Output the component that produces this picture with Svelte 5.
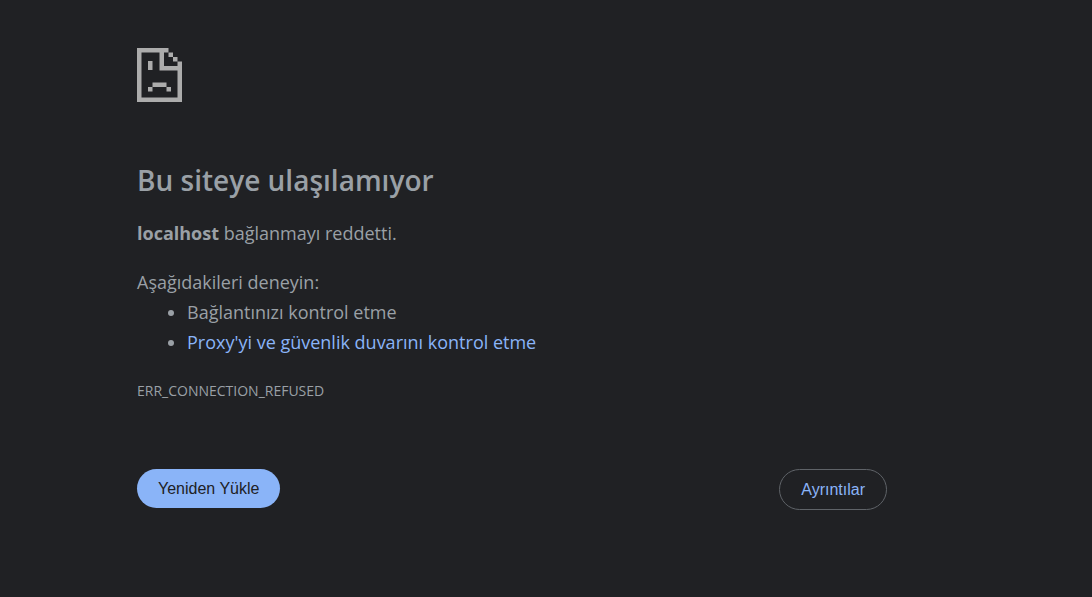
<script>
  let { host = 'localhost', code = 'ERR_CONNECTION_REFUSED' } = $props();
</script>

<main>
  <svg class="sad-page" viewBox="0 0 45 54" aria-hidden="true">
    <path
      d="M0 0H31.5V4.5H27V18H45V54H0ZM4.5 4.5V49.5H40.5V22.5H22.5V4.5Z"
      fill-rule="evenodd"
    />
    <path d="M31.5 4.5H36V9H31.5ZM36 9H40.5V13.5H36ZM40.5 13.5H45V18H40.5Z" />
    <path d="M11 13H15.5V22H11Z" />
    <path d="M15.5 34.5H29.5V39H15.5ZM11 39H15.5V43.5H11ZM29.5 39H34V43.5H29.5Z" />
  </svg>

  <h1>Bu siteye ulaşılamıyor</h1>
  <p class="summary"><strong>{host}</strong> bağlanmayı reddetti.</p>

  <section class="suggestions">
    <p>Aşağıdakileri deneyin:</p>
    <ul>
      <li>Bağlantınızı kontrol etme</li>
      <li><a href="#buttons">Proxy'yi ve güvenlik duvarını kontrol etme</a></li>
    </ul>
  </section>

  <p class="code">{code}</p>

  <div class="buttons" id="buttons">
    <button class="primary" type="button">Yeniden Yükle</button>
    <button class="secondary" type="button">Ayrıntılar</button>
  </div>
</main>

<style>
  :global(body) {
    margin: 0;
    background: #202124;
  }

  main {
    box-sizing: border-box;
    max-width: 887px;
    padding: 48px 0 48px 137px;
    color: #9aa0a6;
    font: 18px/30px 'Segoe UI', 'Open Sans', 'Noto Sans', sans-serif;
  }

  p,
  h1,
  ul {
    margin: 0;
  }

  .sad-page {
    display: block;
    width: 45px;
    height: 54px;
    fill: #acacac;
  }

  h1 {
    margin-top: 60px;
    font-size: 28px;
    font-weight: 600;
    line-height: 36px;
  }

  .summary {
    margin-top: 20px;
  }

  .suggestions {
    margin-top: 19px;
  }

  ul {
    padding-left: 50px;
  }

  a {
    color: #8ab4f8;
    text-decoration: none;
  }

  .code {
    margin-top: 22px;
    font-size: 14px;
    line-height: 24px;
  }

  .buttons {
    display: flex;
    justify-content: space-between;
    align-items: flex-start;
    margin-top: 66px;
  }

  button {
    padding: 0 21px;
    border: 0;
    border-radius: 21px;
    font: 16px/39px Arial, 'Liberation Sans', sans-serif;
    cursor: pointer;
  }

  .primary {
    background: #8ab4f8;
    color: #202124;
  }

  .secondary {
    border: 1px solid #5f6368;
    background: none;
    color: #8ab4f8;
  }
</style>
